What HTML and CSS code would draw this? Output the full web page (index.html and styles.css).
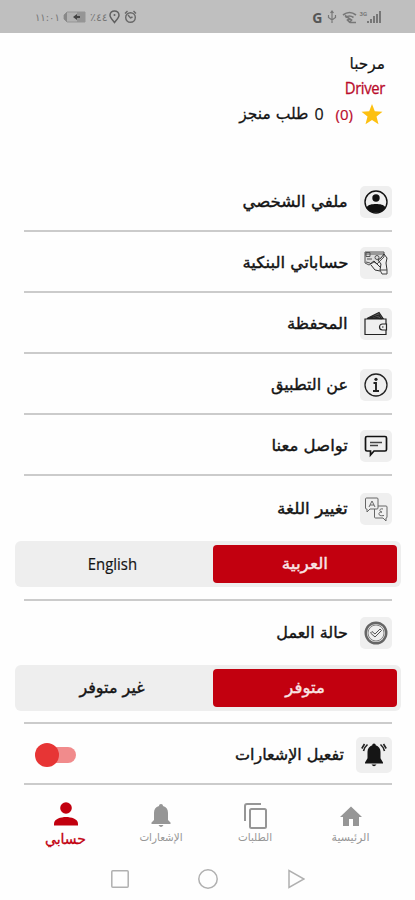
FILE: index.html
```html
<!DOCTYPE html>
<html lang="ar" dir="rtl">
<head>
<meta charset="utf-8">
<title>حسابي</title>
<link rel="stylesheet" href="styles.css">
</head>
<body>
<header class="status" dir="ltr">
  <div class="status-left">
    <span class="time">١١:٠١</span>
    <svg class="battery" width="24" height="12" viewBox="0 0 24 12"><path d="M4 1h18v10H4L1 8V4z" fill="#b2b2b2" stroke="#959595"/><path d="M14 1h8v10h-8z" fill="#959595"/><path d="M1 4l3-3v10L1 8z" fill="#888"/><path d="M10 6l4-3v2h3v2h-3v2z" fill="#444"/></svg>
    <span class="percent">٪٤٤</span>
    <svg width="11" height="14" viewBox="0 0 11 14" fill="none" stroke="#606060" stroke-width="1.5"><path d="M5.500 12.500C3 9.500 1 7.500 1 5.200a4.500 4.300 0 0 1 9 0c0 2.300-2 4.300-4.500 7.300z"/><circle cx="5.500" cy="5" r="1" fill="#606060" stroke="none"/></svg>
    <svg width="13" height="14" viewBox="0 0 13 14" fill="none" stroke="#686868" stroke-width="1.400"><circle cx="6.500" cy="7.500" r="4.800"/><path d="M1 3.500L3.500 1M12 3.500L9.500 1M4 5l2.500 3 2-1"/></svg>
  </div>
  <div class="status-right">
    <b class="google">G</b>
    <svg width="10" height="14" viewBox="0 0 10 14" fill="none" stroke="#777" stroke-width="1.200"><path d="M5 13V2M1.500 5v2.500L5 10l3.500-2.500V5M3.500 3L5 1l1.500 2"/></svg>
    <svg width="15" height="13" viewBox="0 0 15 13" fill="none" stroke="#777" stroke-width="1.600"><path d="M1 4q6.500-5 13 0M3.500 6.500q4-3 8 0M5.500 9q2-1.500 4 0l-2 2zM8 11.500h6M3 4.500l7 5"/></svg>
    <span class="net">3G</span>
    <svg class="signal" width="14" height="13" viewBox="0 0 14 13" fill="#777"><path d="M0 10h2v2H0zM3 8h2v4H3zM6 5h2v7H6zM9 3h2v9H9zM12 0h2v12h-2z"/></svg>
  </div>
</header>

<section class="profile">
  <div class="hello"><span class="t t-hello">مرحبا</span></div>
  <div class="name">Driver</div>
  <div class="stats">
    <svg width="22" height="21" viewBox="0 0 22 21"><path fill="#fdc010" d="M11 0l2.800 7.300 7.700.4-6 4.900 2 7.600L11 16l-6.500 4.200 2-7.600-6-4.900 7.700-.4z"/></svg>
    <span class="score">(0)</span>
    <span class="count">0</span>
    <span class="t t-done">طلب منجز</span>
  </div>
</section>

<main class="menu">
  <div class="row">
    <span class="icon"><svg width="24" height="24" viewBox="0 0 24 24"><circle cx="12" cy="12" r="11" fill="none" stroke="#111" stroke-width="1.400"/><circle cx="12" cy="8" r="3.700" fill="#111"/><path d="M2.500 17.500c1.500-3 5.500-3.500 9.500-3.500s8 .5 9.500 3.500A10.500 10.500 0 0 1 12 22.500 10.500 10.500 0 0 1 2.500 17.500z" fill="#111"/></svg></span>
    <span class="t wide">ملفي الشخصي</span>
  </div>
  <div class="row">
    <span class="icon"><svg width="26" height="26" viewBox="0 0 26 26" fill="none" stroke="#555" stroke-width="1"><path d="M2 2h19v5l-7 7-3-2-5 3-4-2z" fill="#ddd"/><path d="M2 4h19M4 9h5M3 2.500h4v4H3zM12 7.500a2 2 0 1 0 4 0 2 2 0 0 0-4 0M3 12l4 1"/><path d="M15 10l3-2 3-4 3 4-1 5 1 7M15 10l3 4-1 6M7 14l4-3 7 7M8 15l4 5 5 1" stroke="#333"/><path d="M17 20h7v4h-5z" fill="#eee" stroke="#444"/></svg></span>
    <span class="t wide">حساباتي البنكية</span>
  </div>
  <div class="row">
    <span class="icon"><svg width="24" height="26" viewBox="0 0 24 26" fill="none" stroke="#222" stroke-width="1.200"><path d="M22 13V8H1v15.500h21V19M22.500 13h-4a3 3 0 0 0 0 6h4z"/><path d="M3 7.500L15 1.500l4 6zM6 7l9-3 2 3.500zM10 7l5-1" fill="#666"/><path d="M18 16h1.500"/></svg></span>
    <span class="t wide">المحفظة</span>
  </div>
  <div class="row">
    <span class="icon"><svg width="24" height="24" viewBox="0 0 24 24" fill="none" stroke="#222"><circle cx="12" cy="12" r="11" stroke-width="1.300"/><circle cx="12" cy="6.300" r="1.600" fill="#222" stroke="none"/><path d="M9.500 10H12v8M9 18h6" stroke-width="1.900"/></svg></span>
    <span class="t">عن التطبيق</span>
  </div>
  <div class="row">
    <span class="icon"><svg width="24" height="24" viewBox="0 0 24 24" fill="none" stroke="#111" stroke-width="1.700"><path d="M3 2.500h18q1.500 0 1.500 1.500v11.500Q22.500 17 21 17H10l-3.500 4v-4H3q-1.500 0-1.500-1.500V4Q1.500 2.500 3 2.500z"/><path d="M6 8.500h12M6 11.500h8" stroke="#444" stroke-width="1.300"/></svg></span>
    <span class="t wide">تواصل معنا</span>
  </div>
  <div class="row row-open">
    <span class="icon"><svg width="24" height="26" viewBox="0 0 24 26" fill="none" stroke="#666" stroke-width="1"><path d="M2.500 2h10.500q1 0 1 1v9q0 1-1 1H6l-3 3v-3H2.500q-1 0-1-1V3q0-1 1-1z"/><path d="M5 11l3-6 3 6M6 9h4"/><path d="M14 10h8q1 0 1 1v10q0 1-1 1v3l-3-3h-7.500q-1 0-1-1v-8"/><path d="M19 13c-4-1-4 3-1 3-5 0-4 5 2 3.500"/></svg></span>
    <span class="t wider">تغيير اللغة</span>
  </div>
  <div class="segment">
    <div class="on"><span class="t wider">العربية</span></div>
    <div class="off"><span class="english">English</span></div>
  </div>
  <div class="row row-open row-state">
    <span class="icon"><svg width="24" height="24" viewBox="0 0 24 24" fill="none" stroke="#555"><circle cx="12" cy="12" r="10.300" stroke-width="2.400" stroke="#666"/><circle cx="12" cy="12" r="8" stroke-width=".7"/><path d="M6.500 12l1.500-1.500 3 2.500 5-5 1.500 1.500-6.500 6.500z" stroke-width="1"/></svg></span>
    <span class="t">حالة العمل</span>
  </div>
  <div class="segment">
    <div class="on"><span class="t wide">متوفر</span></div>
    <div class="off"><span class="t">غير متوفر</span></div>
  </div>
  <div class="row row-notify">
    <span class="icon icon-big"><svg width="26" height="26" viewBox="0 0 26 26"><path fill="#151515" d="M13 1.500c1.100 0 1.700.8 1.700 1.700 3 .9 4.800 3.300 4.800 6.500v6.500l2.500 4.300v1H4v-1l2.500-4.300V9.700c0-3.200 1.800-5.600 4.800-6.500 0-.9.600-1.700 1.700-1.700zM10.500 22.500h5q-2.500 3.500-5 0z"/><path d="M6.500 2.500Q3.500 5 2.500 9M3.500 2L.8 6.500M19.500 2.500Q22.500 5 23.500 9M22.500 2l2.700 4.500" fill="none" stroke="#222" stroke-width="1.600"/></svg></span>
    <span class="t">تفعيل الإشعارات</span>
    <span class="switch"></span>
  </div>
</main>

<nav class="tabs">
  <div class="tab"><svg width="24" height="24" viewBox="0 0 24 24" fill="#969696"><path d="M10 22v-7h4v7h6v-9h3L12 2.500 1 13h3v9z"/></svg><span class="t">الرئيسية</span></div>
  <div class="tab"><svg width="26" height="28" viewBox="0 0 26 28" fill="none" stroke="#969696" stroke-width="2"><path d="M18 2H4Q2 2 2 4v15"/><rect x="7" y="7" width="16" height="19" rx="1.500"/></svg><span class="t narrow">الطلبات</span></div>
  <div class="tab"><svg width="22" height="24" viewBox="0 0 22 24" fill="#969696"><path d="M11 0c1.200 0 2 .8 2 2 3.500.9 5 3.600 5 7v7l2.500 2.500V20h-19v-1.500L4 16V9c0-3.400 1.500-6.100 5-7 0-1.200.8-2 2-2zM8.500 21h5q-2.500 4-5 0z"/></svg><span class="t narrow">الإشعارات</span></div>
  <div class="tab active"><svg width="24" height="24" viewBox="0 0 24 24" fill="#c2000f"><circle cx="12" cy="6" r="5.800"/><path d="M0 23.500V21.500C0 17 7 15 12 15s12 2 12 6.500v2z"/></svg><span class="t">حسابي</span></div>
</nav>

<footer class="system" dir="ltr">
  <svg width="18" height="18" viewBox="0 0 18 18"><rect x=".8" y=".8" width="16.400" height="16.400" rx="1"/></svg>
  <svg width="20" height="20" viewBox="0 0 20 20"><circle cx="10" cy="10" r="9.200"/></svg>
  <svg width="17" height="20" viewBox="0 0 17 20"><path d="M1 1.500v17L16 10z"/></svg>
</footer>
</body>
</html>
```
FILE: styles.css
```css
* { box-sizing: border-box; }
body {
  margin: 0;
  width: 415px;
  height: 900px;
  overflow: hidden;
  background: #fefefe;
  color: #141414;
  font-family: "DejaVu Sans", sans-serif;
  font-size: 16px;
}
svg { display: block; flex: none; }
.t { display: block; white-space: nowrap; line-height: 24px; }
.wide { transform: scaleX(1.035); transform-origin: right; }
.wider { transform: scaleX(1.060); transform-origin: right; }
.segment .t { transform-origin: center; }
.narrow { transform: scaleX(.94); }

.status {
  height: 33px;
  background: #bfbfbf;
  display: flex;
  justify-content: space-between;
  padding: 1px 34px 0 35px;
  color: #777;
}
.status-left, .status-right { display: flex; align-items: center; }
.time { font-size: 10px; width: 28px; }
.percent { font-size: 11px; width: 19px; margin-left: 3px; }
.status-left svg + svg { margin-left: 4px; }
.google { font: bold 14px "Open Sans", sans-serif; margin-right: 5px; color: #555; }
.status-right svg + svg { margin-left: 5px; }
.net { font: bold 6px Roboto, sans-serif; align-self: flex-start; margin: 9px 0 0 2px; }

.profile { height: 138px; padding: 19px 30px 0; }
.hello { height: 24px; }
.hello .t { transform: scaleX(.96); transform-origin: right; -webkit-text-stroke: .2px currentColor; }
.name {
  height: 24px;
  line-height: 24px;
  font-family: "Open Sans", sans-serif;
  font-size: 16px;
  letter-spacing: -.4px;
  color: #b90b2b;
  transform: scaleX(.93);
  transform-origin: right;
  -webkit-text-stroke: .3px currentColor;
}
.stats { display: flex; align-items: center; height: 28px; padding-right: 2px; }
.score { margin-right: 8px; font: 15px "Open Sans", sans-serif; color: #b90b2b; -webkit-text-stroke: .2px currentColor; }
.count { margin-right: 12px; font: 16px "Open Sans", sans-serif; -webkit-text-stroke: .2px currentColor; }
.t-done { margin-right: 6px; transform: scaleX(.97); transform-origin: right; -webkit-text-stroke: .3px currentColor; }

.row {
  display: flex;
  align-items: center;
  height: 61.100px;
  margin: 0 23px 0 24px;
  padding-top: 3px;
  border-bottom: 2px solid #cbcbcb;
}
.icon {
  display: flex;
  align-items: center;
  justify-content: center;
  flex: none;
  width: 32px;
  height: 32px;
  margin-left: 12px;
  border-radius: 5px;
  background: #efefef;
}
.icon-big { width: 36px; height: 36px; margin-left: 12px; }
.row-open { border: 0; height: 64.500px; padding-top: 1px; }
.menu .t { -webkit-text-stroke: .4px currentColor; }

.segment {
  display: flex;
  height: 46px;
  margin: 0 14px 0 15px;
  padding: 4px;
  border-radius: 6px;
  background: #eee;
}
.segment > div { display: flex; align-items: center; justify-content: center; }
.segment .on { width: 184px; background: #c2000f; color: #f9e6e7; border-radius: 4px; }
.segment .off { flex: 1; padding-right: 8px; }
.english {
  font: 500 16px "Open Sans", sans-serif;
  transform: scaleX(.93);
  -webkit-text-stroke: .2px currentColor;
}
.row-state {
  border-top: 2px solid #cbcbcb;
  margin-top: 12px;
  height: 66px;
}
.row-notify { margin-top: 11px; height: 63px; border-top: 2px solid #cbcbcb; }
.switch {
  position: relative;
  width: 38px;
  height: 16px;
  margin: 0 auto 0 14px;
  border-radius: 8px;
  background: #f18b8c;
}
.switch::before {
  content: "";
  position: absolute;
  left: -3px;
  top: -4px;
  width: 24px;
  height: 24px;
  border-radius: 50%;
  background: #e73535;
}

.tabs { display: flex; height: 70px; padding: 17px 17px 0 18px; }
.tab {
  display: flex;
  flex: 1;
  flex-direction: column;
  align-items: center;
  font-size: 11px;
  color: #969696;
}
.tab svg { height: 28px; }
.tab .t { line-height: 16px; }
.tab.active { color: #c2000f; font-size: 14px; }
.tab.active svg { height: 24px; }
.tab.active .t { line-height: 26px; -webkit-text-stroke: .3px currentColor; }

.system { display: flex; align-items: center; justify-content: space-between; height: 46px; padding: 2px 110px 0 111px; }
.system svg { fill: none; stroke: #b0b0b0; stroke-width: 1.500; }
.system svg:nth-child(2) { margin-right: 2px; }
```
